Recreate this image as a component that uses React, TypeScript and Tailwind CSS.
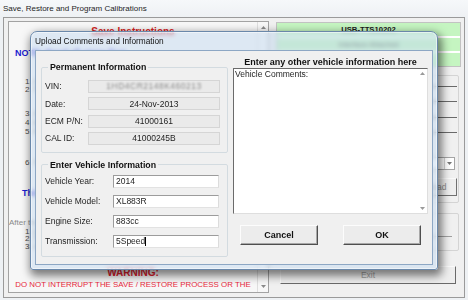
import React from "react";

const Tri = ({ up = false }: { up?: boolean }) => (
  <svg width="5" height="3" viewBox="0 0 5 3">
    <polygon points={up ? "0,3 5,3 2.5,0" : "0,0 5,0 2.5,3"} fill="currentColor" />
  </svg>
);

function ReadField({ label, value, blur = false }: { label: string; value: string; blur?: boolean }) {
  return (
    <div className="flex items-center h-[13px]">
      <span className="w-[43px] shrink-0 whitespace-nowrap">{label}</span>
      <div className="w-[132px] h-[13px] bg-[#eaeaea] border border-[#d5d5d5] flex items-center justify-center">
        <span className={blur ? "blur-[1.3px] text-[#8a8a8a] tracking-[0.5px]" : ""}>{value}</span>
      </div>
    </div>
  );
}

function InputField({ label, value, caret = false }: { label: string; value: string; caret?: boolean }) {
  return (
    <div className="flex items-center h-[13px]">
      <span className="w-[68px] shrink-0 whitespace-nowrap">{label}</span>
      <div className="w-[106px] h-[13px] bg-white border border-t-[#9c9c9c] border-l-[#9c9c9c] border-r-[#dcdcdc] border-b-[#e2e2e2] flex items-center pl-[2px]">
        <span>{value}</span>
        {caret && <span className="w-px h-[9px] bg-black" />}
      </div>
    </div>
  );
}

export default function App() {
  return (
    <div className="relative w-[468px] h-[300px] overflow-hidden bg-[#eef1f4] font-['Liberation_Sans',Arial,sans-serif] text-[#1a1a1a]">
      {/* parent window title */}
      <div className="h-[17px] pl-[3px] flex items-center text-[8px] leading-none text-[#1e1e1e] bg-gradient-to-b from-[#f6f8fa] to-[#eef1f4]">
        Save, Restore and Program Calibrations
      </div>

      {/* parent window body */}
      <div className="mx-[3px] h-[281px] border border-[#9a9a9a] bg-[#f0f0f0] flex pl-[4px] pt-[3px]">
        {/* left rich text box */}
        <div className="w-[261px] h-[272px] border border-[#a3a3a3] bg-[#f7f7f7] flex">
          <div className="flex-1 flex flex-col text-[8px] leading-none whitespace-nowrap overflow-hidden">
            <div className="h-[17px] pt-[2px] flex items-center justify-center text-[10px] font-bold text-[#d41f1f]">Save Instructions</div>
            <div className="mt-[9px] h-[10px] flex items-center pl-[6px] text-[9px] font-bold text-[#1c1cd0]">
              NOTE: Read all steps first.
            </div>
            <div className="mt-[20px] h-[8px] flex items-center pl-[16px] text-[#4d4d4d]">1. Connect the interface to the vehicle.</div>
            <div className="h-[8px] flex items-center pl-[16px] text-[#4d4d4d]">2. Turn the ignition key on.</div>
            <div className="mt-[15px] h-[9px] flex items-center pl-[16px] text-[#4d4d4d]">3. Select the calibration to save.</div>
            <div className="h-[9px] flex items-center pl-[16px] text-[#4d4d4d]">4. Enter the vehicle information.</div>
            <div className="h-[9px] flex items-center pl-[16px] text-[#4d4d4d]">5. Press the Save button.</div>
            <div className="mt-[23px] h-[8px] flex items-center pl-[16px] text-[#4d4d4d]">6. Turn the ignition off.</div>
            <div className="mt-[21px] h-[10px] flex items-center pl-[13px] text-[9px] font-bold text-[#1c1cd0]">
              This may take several minutes.
            </div>
            <div className="mt-[20px] h-[10px] flex items-center pl-[0px] text-[#8a8a8a]">After the save is complete:</div>
            <div className="h-[7.5px] flex items-center pl-[16px] text-[#4d4d4d]">1. Disconnect the interface.</div>
            <div className="h-[7.5px] flex items-center pl-[16px] text-[#4d4d4d]">2. Turn the ignition off.</div>
            <div className="h-[7.5px] flex items-center pl-[16px] text-[#4d4d4d]">3. Close this window.</div>
            <div className="mt-[16.5px] h-[12px] flex items-center justify-center text-[10px] font-bold text-[#e0202e]">WARNING:</div>
            <div className="h-[12px] flex items-center justify-center text-[7.9px] text-[#e8283c]">
              DO NOT INTERRUPT THE SAVE / RESTORE PROCESS OR THE
            </div>
          </div>
          <div className="w-[11px] border-l border-[#dedede] flex flex-col justify-between items-center py-[4px] text-[#8a8a8a]">
            <Tri up />
            <Tri />
          </div>
        </div>

        {/* right panel */}
        <div className="ml-[7px] w-[185px] flex flex-col text-[8px]">
          <div className="mt-[1px] border border-[#c2c2c2] bg-white flex flex-col gap-[2px]">
            <div className="h-[13px] bg-[#c5f5c1] flex items-center justify-center text-[7.7px] font-bold text-[#1a1a1a]">USB-TTS10202</div>
            <div className="h-[13px] bg-[#c5f5c1] flex items-center justify-center text-[7.5px] text-[#5a5a5a]">Interface Attached</div>
            <div className="h-[13px] bg-[#c5f5c1]" />
          </div>

          <div className="mt-[8px] mr-[2px] h-[128px] border border-[#d4d4d4] rounded-[2px] flex flex-col pt-[10px] pl-[8px] pr-[1px]">
            <div className="h-px bg-[#6a6a6a]" />
            <div className="mt-[14px] h-px bg-[#6a6a6a]" />
            <div className="mt-[15px] h-px bg-[#6a6a6a]" />
            <div className="mt-[14px] h-px bg-[#6a6a6a]" />
            <div className="mt-[24px] ml-[5px] mr-[2px] h-[13px] border border-[#a5a5a5] bg-white flex justify-end">
              <div className="w-[10px] border-l border-[#d6d6d6] flex items-center justify-center text-[#777]">
                <Tri />
              </div>
            </div>
            <div className="mt-[8px] self-end w-[48px] h-[18px] bg-[#eeeeee] border border-t-[#fafafa] border-l-[#fafafa] border-r-[#707070] border-b-[#707070] flex items-center justify-center text-[8.5px] text-[#8c8c8c]">
              Upload
            </div>
          </div>

          <div className="mt-[10px] mr-[2px] h-[38px] border border-[#d4d4d4] rounded-[2px] flex flex-col">
            <div className="mx-[6px] mt-[8px] h-[15px] border-b border-[#a0a0a0]" />
          </div>

          <div className="mt-[15px] ml-[4px] w-[176px] h-[18px] bg-[#eeeeee] border border-t-[#fafafa] border-l-[#fafafa] border-r-[#6a6a6a] border-b-[#6a6a6a] flex items-center justify-center text-[8.5px] text-[#a0a0a0]">
            Exit
          </div>
        </div>
      </div>

      {/* dialog */}
      <div className="absolute left-[30px] top-[31px] w-[408px] h-[239px] rounded-t-[7px] rounded-b-[3px] border border-[#6a88aa] bg-[#c4d9f0]/50 backdrop-blur-[2px] shadow-[inset_0_0_0_1px_rgba(255,255,255,0.55),2px_4px_9px_2px_rgba(0,0,0,0.5)] flex flex-col">
        <div className="h-[18px] pl-[4px] flex items-center text-[8.3px] text-[#111]">Upload Comments and Information</div>
        <div className="mx-[4px] mb-[4px] flex-1 border border-[#8da7c4] bg-[#f0f0f0] flex pl-[5px] text-[8.5px] leading-none text-[#1e1e1e]">
          {/* left column */}
          <div className="w-[187px] flex flex-col pt-[10px]">
            <fieldset className="border border-[#d3dbe0] rounded-[2px] pl-[3px] pt-[7px] pb-[7px] flex flex-col gap-[4.3px]">
              <legend className="ml-[3px] px-[2px] h-[12px] leading-[12px] text-[8.8px] font-bold text-[#111]">Permanent Information</legend>
              <ReadField label="VIN:" value="1HD4CR2148K460213" blur />
              <ReadField label="Date:" value="24-Nov-2013" />
              <ReadField label="ECM P/N:" value="41000161" />
              <ReadField label="CAL ID:" value="41000245B" />
            </fieldset>
            <fieldset className="mt-[6px] border border-[#d3dbe0] rounded-[2px] pl-[3px] pt-[4px] pb-[8px] flex flex-col gap-[7px]">
              <legend className="ml-[3px] px-[2px] h-[12px] leading-[12px] text-[8.8px] font-bold text-[#111]">Enter Vehicle Information</legend>
              <InputField label="Vehicle Year:" value="2014" />
              <InputField label="Vehicle Model:" value="XL883R" />
              <InputField label="Engine Size:" value="883cc" />
              <InputField label="Transmission:" value="5Speed" caret />
            </fieldset>
          </div>

          {/* right column */}
          <div className="ml-[5px] w-[195px] flex flex-col">
            <div className="mt-[5px] h-[12px] flex items-center justify-center text-[9px] font-bold text-[#111] whitespace-nowrap">
              Enter any other vehicle information here
            </div>
            <div className="h-[146px] border border-t-[#6b6b6b] border-l-[#6b6b6b] border-r-[#dedede] border-b-[#dedede] bg-white flex">
              <div className="flex-1 pl-[1px] pt-[1px] leading-[8px]">Vehicle Comments:</div>
              <div className="w-[10px] flex flex-col items-center justify-between py-[3px] text-[#9a9a9a]">
                <Tri up />
                <Tri />
              </div>
            </div>
            <div className="mt-[11px] flex">
              <div className="ml-[7px] w-[78px] h-[20px] bg-[#ececec] border border-t-[#fcfcfc] border-l-[#fcfcfc] border-r-[#4f4f4f] border-b-[#4f4f4f] shadow-[inset_-1px_-1px_0_#a8a8a8] flex items-center justify-center text-[9px] font-bold text-[#111]">
                Cancel
              </div>
              <div className="ml-[25px] w-[78px] h-[20px] bg-[#ececec] border border-t-[#fcfcfc] border-l-[#fcfcfc] border-r-[#4f4f4f] border-b-[#4f4f4f] shadow-[inset_-1px_-1px_0_#a8a8a8] flex items-center justify-center text-[9px] font-bold text-[#111]">
                OK
              </div>
            </div>
          </div>
        </div>
      </div>
    </div>
  );
}
